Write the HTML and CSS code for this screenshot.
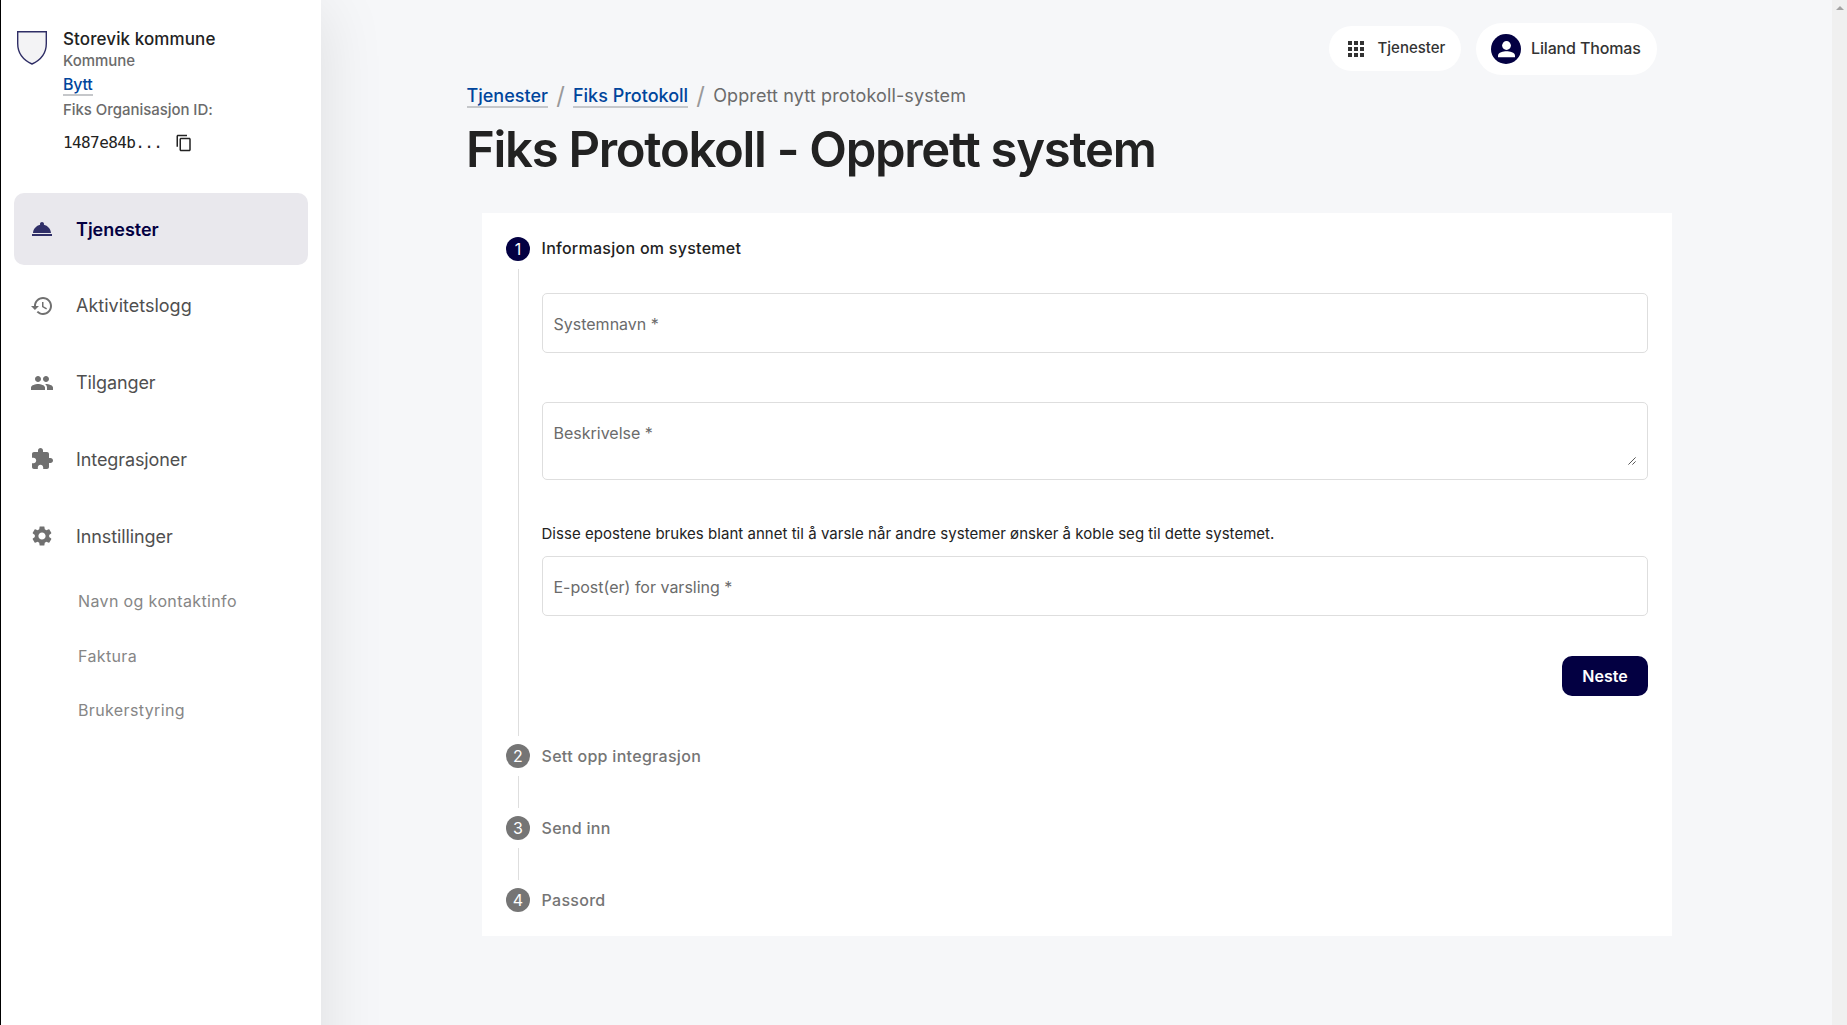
FILE: index.html
```html
<!DOCTYPE html>
<html lang="no">
<head>
<meta charset="utf-8">
<title>Fiks Protokoll - Opprett system</title>
<link rel="stylesheet" href="styles.css">
</head>
<body>
<div class="app">
  <aside class="sidebar">
    <div class="org">
      <svg class="org-shield" width="32" height="36" viewBox="0 0 32 36"><path d="M1.700 1.700h28.600v11.800c0 9.500-5.500 16.500-14.300 20.500C7.200 30 1.700 23 1.700 13.500z" fill="#f3f3f5" stroke="#2f2e66" stroke-width="1.400"/></svg>
      <div class="org-info">
        <div class="org-name"><span>Storevik kommune</span></div>
        <div class="org-type"><span>Kommune</span></div>
        <div class="org-switch"><a class="link" href="#">Bytt</a></div>
        <div class="org-label"><span>Fiks Organisasjon ID:</span></div>
        <div class="org-id">
          <span class="org-code">1487e84b...</span>
          <svg class="copy" width="18" height="18" viewBox="0 0 24 24"><path fill="#222" d="M16 1H4c-1.100 0-2 .9-2 2v14h2V3h12V1zm3 4H8c-1.100 0-2 .9-2 2v14c0 1.100.9 2 2 2h11c1.100 0 2-.9 2-2V7c0-1.100-.9-2-2-2zm0 16H8V7h11v14z"/></svg>
        </div>
      </div>
    </div>
    <nav class="nav">
      <a class="nav-item active" href="#"><svg class="nav-icon" viewBox="0 0 24 24"><path d="M2 17h20v2H2zm11.840-9.210c.1-.24.160-.51.160-.79 0-1.100-.9-2-2-2s-2 .9-2 2c0 .28.060.55.160.79C6.250 8.600 3.270 11.930 3 16h18c-.27-4.070-3.250-7.400-7.160-8.210z"/></svg><span>Tjenester</span></a>
      <a class="nav-item" href="#"><svg class="nav-icon" viewBox="0 0 24 24"><path d="M13 3c-4.970 0-9 4.030-9 9H1l3.890 3.890.07.14L9 12H6c0-3.870 3.130-7 7-7s7 3.130 7 7-3.130 7-7 7c-1.930 0-3.680-.79-4.940-2.060l-1.420 1.420C8.270 19.990 10.510 21 13 21c4.970 0 9-4.030 9-9s-4.030-9-9-9zm-1 5v5l4.280 2.540.72-1.210-3.500-2.080V8H12z"/></svg><span>Aktivitetslogg</span></a>
      <a class="nav-item" href="#"><svg class="nav-icon" viewBox="0 0 24 24"><path d="M16 11c1.660 0 2.990-1.340 2.990-3S17.660 5 16 5c-1.660 0-3 1.340-3 3s1.340 3 3 3zm-8 0c1.660 0 2.990-1.340 2.990-3S9.660 5 8 5C6.340 5 5 6.340 5 8s1.340 3 3 3zm0 2c-2.330 0-7 1.170-7 3.500V19h14v-2.500c0-2.330-4.670-3.500-7-3.500zm8 0c-.29 0-.62.020-.97.050 1.160.84 1.970 1.970 1.970 3.450V19h6v-2.500c0-2.330-4.670-3.500-7-3.500z"/></svg><span class="snug">Tilganger</span></a>
      <a class="nav-item" href="#"><svg class="nav-icon" viewBox="0 0 24 24"><path d="M20.500 11H19V7c0-1.100-.9-2-2-2h-4V3.500C13 2.120 11.880 1 10.500 1S8 2.120 8 3.500V5H4c-1.100 0-1.990.9-1.990 2v3.800H3.500c1.490 0 2.700 1.210 2.700 2.700s-1.210 2.700-2.700 2.700H2V20c0 1.100.9 2 2 2h3.800v-1.500c0-1.490 1.210-2.700 2.700-2.700 1.490 0 2.700 1.210 2.700 2.700V22H17c1.100 0 2-.9 2-2v-4h1.500c1.380 0 2.500-1.120 2.500-2.500S21.880 11 20.500 11z"/></svg><span class="snug">Integrasjoner</span></a>
      <a class="nav-item" href="#"><svg class="nav-icon" viewBox="0 0 24 24"><path d="M19.140 12.940c.04-.3.060-.61.060-.94 0-.32-.02-.64-.07-.94l2.030-1.580c.18-.14.230-.41.120-.61l-1.920-3.320c-.12-.22-.37-.29-.59-.22l-2.390.96c-.5-.38-1.030-.7-1.620-.94l-.36-2.540c-.04-.24-.24-.41-.48-.41h-3.840c-.24 0-.43.170-.47.410l-.36 2.540c-.59.240-1.130.57-1.620.94l-2.390-.96c-.22-.08-.47 0-.59.220L2.740 8.870c-.12.210-.08.470.12.610l2.030 1.580c-.05.300-.09.630-.09.940s.02.640.07.940l-2.030 1.580c-.18.140-.23.410-.12.610l1.920 3.320c.12.220.37.290.59.220l2.390-.96c.5.380 1.030.7 1.620.94l.36 2.540c.05.240.24.410.48.410h3.840c.24 0 .44-.17.470-.41l.36-2.540c.59-.24 1.130-.56 1.620-.94l2.390.96c.22.080.47 0 .59-.22l1.920-3.320c.12-.22.070-.47-.12-.61l-2.010-1.580zM12 15.600c-1.980 0-3.600-1.620-3.600-3.600s1.620-3.600 3.600-3.600 3.600 1.620 3.600 3.600-1.620 3.600-3.600 3.600z"/></svg><span class="snug">Innstillinger</span></a>
    </nav>
    <div class="subnav">
      <a class="sub-item" href="#"><span>Navn og kontaktinfo</span></a>
      <a class="sub-item" href="#"><span>Faktura</span></a>
      <a class="sub-item" href="#"><span>Brukerstyring</span></a>
    </div>
  </aside>

  <main class="main">
    <header class="topbar">
      <button class="pill apps">
        <svg width="24" height="24" viewBox="0 0 24 24"><path fill="#333" d="M4 8h4V4H4v4zm6 12h4v-4h-4v4zm-6 0h4v-4H4v4zm0-6h4v-4H4v4zm6 0h4v-4h-4v4zm6-10v4h4V4h-4zm-6 4h4V4h-4v4zm6 6h4v-4h-4v4zm0 6h4v-4h-4v4z"/></svg>
        <span>Tjenester</span>
      </button>
      <button class="pill user">
        <svg width="30" height="30" viewBox="0 0 30 30"><circle cx="15" cy="15" r="15" fill="#030042"/><circle cx="15.500" cy="11.500" r="4.400" fill="#fff"/><path fill="#fff" d="M7 23.200v-1.600c0-3 5.500-4.300 8.500-4.300s8.500 1.300 8.500 4.300v1.600z"/></svg>
        <span>Liland Thomas</span>
      </button>
    </header>
    <div class="breadcrumb">
      <a class="link" href="#">Tjenester</a><span class="slash">/</span><a class="link" href="#">Fiks Protokoll</a><span class="slash">/</span><span class="here">Opprett nytt protokoll-system</span>
    </div>
    <h1 class="title"><span>Fiks Protokoll - Opprett system</span></h1>

    <section class="card">
      <div class="step-head current"><span class="num">1</span><span class="step-label">Informasjon om systemet</span></div>
      <div class="step-body form">
        <div class="field"><span>Systemnavn *</span></div>
        <div class="field area"><span>Beskrivelse *</span>
          <svg class="grip" width="8" height="8" viewBox="0 0 8 8"><path d="M.4 7.600L7.600.4M4.400 7.600L7.600 4.400" stroke="#444" stroke-width=".9" fill="none"/></svg>
        </div>
        <p class="hint"><span>Disse epostene brukes blant annet til å varsle når andre systemer ønsker å koble seg til dette systemet.</span></p>
        <div class="field"><span>E-post(er) for varsling *</span></div>
        <div class="actions"><button class="next"><span>Neste</span></button></div>
      </div>
      <div class="step-head"><span class="num">2</span><span class="step-label">Sett opp integrasjon</span></div>
      <div class="step-body"></div>
      <div class="step-head"><span class="num">3</span><span class="step-label">Send inn</span></div>
      <div class="step-body"></div>
      <div class="step-head"><span class="num">4</span><span class="step-label">Passord</span></div>
    </section>
  </main>
  <div class="scrollbar"><svg width="8" height="4" viewBox="0 0 8 4"><path d="M0 4L4 0l4 4z" fill="#a3a3a3"/></svg></div>
</div>
</body>
</html>
```
FILE: styles.css
```css
* { box-sizing: border-box; }
body { margin: 0; font-family: Inter, sans-serif; color: #222; background: #f6f7f9; overflow: hidden; }
a { text-decoration: none; color: inherit; }
button { border: 0; font-family: inherit; padding: 0; margin: 0; }
.app { display: flex; height: 1025px; overflow: hidden; }

/* taller than the window so the shadow keeps its strength at the bottom edge */
.sidebar { width: 321px; height: 1100px; flex: none; background: #fff; border-left: 1px solid #000; box-shadow: 2px 8px 60px rgba(0,0,0,.1); z-index: 1; }
.org { display: flex; padding: 30px 0 0 15px; height: 193px; }
.org-shield { flex: none; }
.org-info { margin-left: 15px; margin-top: -3px; }
.org-name { font-size: 17px; font-weight: 500; line-height: 24px; letter-spacing: .1px; }
.org-type { font-size: 15px; font-weight: 500; line-height: 20px; color: #6b6b6b; letter-spacing: -.05px; }
.org-switch { font-size: 16px; font-weight: 500; line-height: 26px; height: 28px; letter-spacing: -.2px; }
.org-label { font-size: 15px; font-weight: 500; line-height: 22px; color: #6b6b6b; letter-spacing: -.05px; }
.org-id { display: flex; align-items: center; margin-top: 10px; height: 24px; gap: 13px; }
.org-code { font: 16px "DejaVu Sans Mono", monospace; letter-spacing: -.6px; padding-bottom: 1px; }
.link { color: #00459c; border-bottom: 2px solid #c5c7ca; }

.nav { display: flex; flex-direction: column; gap: 4.800px; padding: 0 13px; }
.nav-item { display: flex; align-items: center; height: 72px; padding-left: 16px; gap: 22px; border-radius: 10px; font-size: 18px; color: #4f4f4f; }
.nav-icon { width: 24px; height: 24px; fill: #707070; }
.snug { letter-spacing: -.1px; }
.active { background: #e9e8ed; color: #030042; font-weight: 600; }
.active .nav-icon { fill: #302f68; }
.subnav { padding: 2px 0 0 77px; display: flex; flex-direction: column; }
.sub-item { font-size: 16px; letter-spacing: .37px; color: #868686; line-height: 54.500px; height: 54.500px; }

.main { flex: 1; padding-left: 145.500px; }
.topbar { display: flex; gap: 15px; align-items: center; justify-content: flex-end; height: 75px; padding: 23px 175px 0 0; }
.pill { background: #fff; display: flex; align-items: center; font-size: 16px; font-weight: 500; color: #333; border-radius: 26px; }
.pill span { padding-bottom: 2px; }
.apps { width: 132px; height: 45px; padding-left: 15px; gap: 9.500px; margin-top: -1px; font-size: 15px; }
.user { width: 181px; height: 52px; padding-left: 15px; gap: 10px; letter-spacing: -.15px; }
.breadcrumb { display: flex; height: 41px; align-items: center; font-size: 18px; }
.breadcrumb .link { line-height: 21px; font-weight: 500; margin-top: 2px; }
.slash { width: 25px; text-align: center; color: #999; font-size: 24px; }
.here { color: #6b6b6b; letter-spacing: .12px; }
.title { margin: 0 0 0 -.5px; font-size: 49px; font-weight: 600; line-height: 68px; letter-spacing: -1.280px; height: 97px; }

.card { width: 1190px; margin-left: 15.500px; background: #fff; height: 723px; padding: 24px; }
.step-head { display: flex; align-items: center; gap: 11.500px; height: 24px; color: #757575; font-size: 16px; font-weight: 500; letter-spacing: .3px; }
.current { color: #222; }
.current .step-label { padding-bottom: 2px; letter-spacing: .27px; }
.num { width: 24px; height: 24px; border-radius: 50%; background: #757575; color: #fff; font-size: 16px; font-weight: 400; letter-spacing: 0; display: flex; align-items: center; justify-content: center; }
.current .num { background: #030042; }
.step-body { margin: 8px 0 8px 12px; border-left: 1px solid #dedede; height: 32px; }
.form { height: 467px; padding: 24px 0 0 23px; }
.field { height: 60px; border: 1px solid #dedede; border-radius: 5px; padding: 0 11px 0 10.500px; font-size: 16px; line-height: 60px; color: #6b6b6b; }
.area { height: 78px; margin-top: 49px; display: flex; justify-content: space-between; }
.grip { margin-top: 54px; }
.hint { margin: 42px 0 11px -.5px; font-size: 15px; line-height: 23px; height: 23px; letter-spacing: .03px; }
.actions { display: flex; justify-content: flex-end; margin-top: 40px; }
.next { width: 86px; height: 40px; border-radius: 10px; background: #030042; color: #fff; font-size: 16px; font-weight: 600; }

.scrollbar { width: 15px; flex: none; background: #f0f0f0; display: flex; justify-content: center; padding-top: 6px; }
.scrollbar svg { display: block; }
```
